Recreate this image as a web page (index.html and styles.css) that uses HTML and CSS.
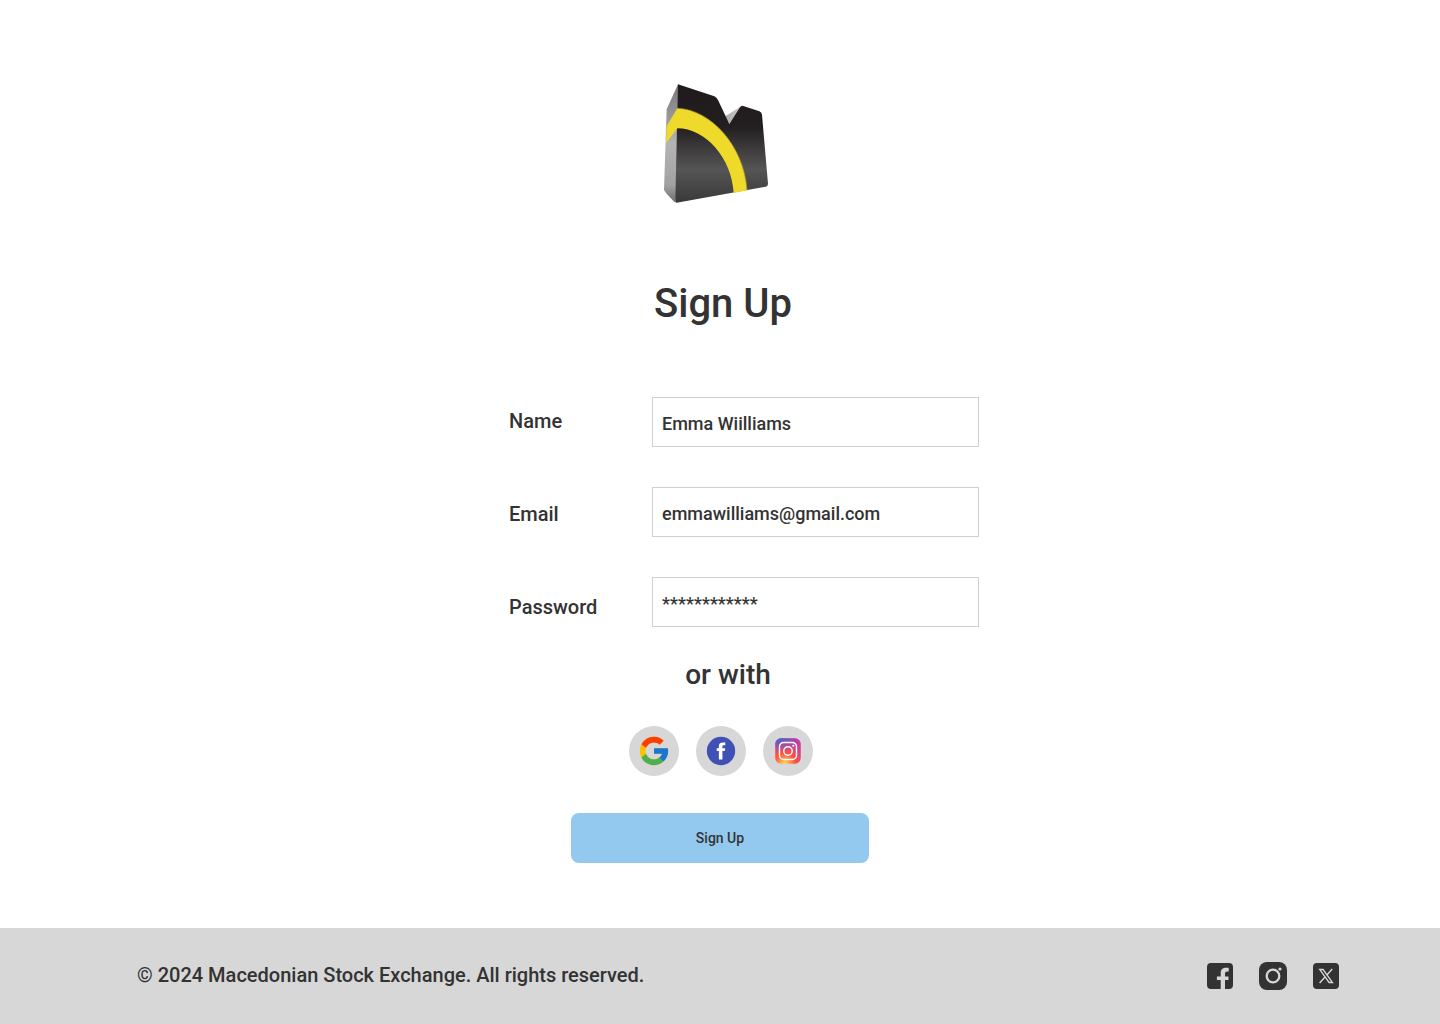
FILE: index.html
```html
<!DOCTYPE html>
<html lang="en">
<head>
  <meta charset="utf-8">
  <meta name="viewport" content="width=device-width, initial-scale=1">
  <title>Sign Up - Macedonian Stock Exchange</title>
  <link rel="stylesheet" href="styles.css">
</head>
<body>
  <main class="signup">
    <svg class="logo" viewBox="0 0 420 405" role="img" aria-label="Macedonian Stock Exchange">
      <defs>
        <linearGradient id="front" x1="0" y1="0" x2="0" y2="1">
          <stop offset="0" stop-color="#1f1b1c"/>
          <stop offset="0.36" stop-color="#231f20"/>
          <stop offset="0.72" stop-color="#565556"/>
          <stop offset="1" stop-color="#3a393a"/>
        </linearGradient>
        <linearGradient id="side" x1="0" y1="0" x2="0" y2="1">
          <stop offset="0" stop-color="#777"/>
          <stop offset="0.5" stop-color="#b4b4b4"/>
          <stop offset="0.85" stop-color="#a2a2a2"/>
          <stop offset="1" stop-color="#6d6d6d"/>
        </linearGradient>
        <linearGradient id="notch" x1="0" y1="0" x2="1" y2="0">
          <stop offset="0" stop-color="#aaa"/>
          <stop offset="1" stop-color="#ccc"/>
        </linearGradient>
      </defs>
      <path d="M84 28 L50 103 L42 344 Q44 352 76 383 L84 300Z" fill="url(#side)"/>
      <path d="M226 124 L238 146 L276 92Z" fill="url(#notch)"/>
      <path d="M84 28 L193 64 Q200 67 204 75 L238 147 L270 97 Q274 91 280 93 L328 109 Q335 112 336 119 L354 326 Q354 334 347 335 L80 383 Q76 383 76 377Z" fill="url(#front)"/>
      <path d="M82 100 C180 104 282 210 291 346 L251 354 C246 250 166 160 82 160 L48 205 L50 154Z" fill="#efda2b"/>
      <path d="M84 100 C180 104 282 210 291 346" fill="none" stroke="#a89a26" stroke-width="2"/>
    </svg>

    <h1 class="title">Sign Up</h1>

    <form class="form" id="signup-form">
      <div class="labels">
        <label for="name">Name</label>
        <label for="email">Email</label>
        <label for="password">Password</label>
      </div>
      <div class="fields">
        <input class="field" id="name" type="text" value="Emma Wiilliams">
        <input class="field" id="email" type="email" value="emmawilliams@gmail.com">
        <input class="field" id="password" type="text" autocomplete="off" value="************">
      </div>
    </form>

    <p class="divider">or with</p>

    <div class="providers">
      <button class="provider" type="button" aria-label="Sign up with Google">
        <svg viewBox="0 0 48 48">
          <path fill="#FFC107" d="M43.611 20.083H42V20H24v8h11.303c-1.649 4.657-6.08 8-11.303 8-6.627 0-12-5.373-12-12s5.373-12 12-12c3.059 0 5.842 1.154 7.961 3.039l5.657-5.657C34.046 6.053 29.268 4 24 4 12.955 4 4 12.955 4 24s8.955 20 20 20 20-8.955 20-20c0-1.341-.138-2.65-.389-3.917z"/>
          <path fill="#FF3D00" d="M6.306 14.691l6.571 4.819C14.655 15.108 18.961 12 24 12c3.059 0 5.842 1.154 7.961 3.039l5.657-5.657C34.046 6.053 29.268 4 24 4 16.318 4 9.656 8.337 6.306 14.691z"/>
          <path fill="#4CAF50" d="M24 44c5.166 0 9.86-1.977 13.409-5.192l-6.19-5.238C29.211 35.091 26.715 36 24 36c-5.202 0-9.619-3.317-11.283-7.946l-6.522 5.025C9.505 39.556 16.227 44 24 44z"/>
          <path fill="#1976D2" d="M43.611 20.083H42V20H24v8h11.303c-.792 2.237-2.231 4.166-4.087 5.571l6.193 5.238C36.971 39.205 44 34 44 24c0-1.341-.138-2.65-.389-3.917z"/>
        </svg>
      </button>
      <button class="provider" type="button" aria-label="Sign up with Facebook">
        <svg viewBox="0 0 48 48">
          <circle cx="24" cy="24" r="20" fill="#3F51B5"/>
          <path fill="#fff" d="M29.368 24H26v12h-5V24h-3v-4h3v-2.41c.002-3.508 1.459-5.59 5.592-5.59H30v4h-2.287C26.104 16 26 16.6 26 17.723V20h4l-.632 4z"/>
        </svg>
      </button>
      <button class="provider" type="button" aria-label="Sign up with Instagram">
        <svg viewBox="0 0 48 48">
          <defs>
            <radialGradient id="warm" cx="19.38" cy="42.035" r="44.899" gradientUnits="userSpaceOnUse">
              <stop offset="0" stop-color="#fd5"/>
              <stop offset=".328" stop-color="#ff543f"/>
              <stop offset=".348" stop-color="#fc5245"/>
              <stop offset=".504" stop-color="#e64771"/>
              <stop offset=".643" stop-color="#d53e91"/>
              <stop offset=".761" stop-color="#cc39a4"/>
              <stop offset=".841" stop-color="#c837ab"/>
            </radialGradient>
            <radialGradient id="cool" cx="11.786" cy="5.54" r="29.813" gradientTransform="matrix(1 0 0 .6663 0 1.849)" gradientUnits="userSpaceOnUse">
              <stop offset="0" stop-color="#4168c9"/>
              <stop offset=".999" stop-color="#4168c9" stop-opacity="0"/>
            </radialGradient>
          </defs>
          <rect x="6" y="6" width="36" height="36" rx="8" fill="url(#warm)"/>
          <rect x="6" y="6" width="36" height="36" rx="8" fill="url(#cool)"/>
          <rect x="12" y="12" width="24" height="24" rx="6" fill="none" stroke="#fff" stroke-width="2"/>
          <circle cx="24" cy="24" r="6" fill="none" stroke="#fff" stroke-width="2"/>
          <circle cx="31.5" cy="16.5" r="1.5" fill="#fff"/>
        </svg>
      </button>
    </div>

    <button class="submit" type="submit" form="signup-form">Sign Up</button>
  </main>

  <footer class="footer">
    <p class="copyright">© 2024 Macedonian Stock Exchange. All rights reserved.</p>
    <nav class="social" aria-label="Social media">
      <a href="#" aria-label="Facebook">
        <svg viewBox="0 0 32 32">
          <path fill="#333" d="M7 3h18a4 4 0 0 1 4 4v18a4 4 0 0 1-4 4h-4V20h3.500v-3.600H21v-2.600c0-1.600.8-2.300 2.200-2.300h1.500V7.800h-2.500c-3.400 0-5.500 1.900-5.500 5.200v3.400h-3.800V20h3.800v9H7a4 4 0 0 1-4-4V7a4 4 0 0 1 4-4z"/>
        </svg>
      </a>
      <a href="#" aria-label="Instagram">
        <svg viewBox="0 0 32 32">
          <rect x="2" y="2" width="28" height="28" rx="8" fill="#333"/>
          <circle cx="16" cy="16" r="6.300" fill="none" stroke="#d7d7d7" stroke-width="2.300"/>
          <circle cx="23" cy="9" r="1.600" fill="#d7d7d7"/>
        </svg>
      </a>
      <a href="#" aria-label="X">
        <svg viewBox="0 0 32 32">
          <rect x="3" y="3" width="26" height="26" rx="4" fill="#333"/>
          <path d="M9.700 9.500h3.400l9.400 13h-3.400z" fill="none" stroke="#d7d7d7" stroke-width="1.300"/>
          <path d="M22.200 9l-5.500 6.200M15 17l-5.400 6" fill="none" stroke="#d7d7d7" stroke-width="1.400"/>
        </svg>
      </a>
    </nav>
  </footer>
</body>
</html>
```
FILE: styles.css
```css
* {
  box-sizing: border-box;
}

body {
  display: flex;
  flex-direction: column;
  min-height: 100vh;
  margin: 0;
  background: #fff;
  color: #333;
  font-family: Roboto, "Liberation Sans", sans-serif;
  font-weight: 500;
}

.signup {
  display: flex;
  flex: 1;
  flex-direction: column;
  align-items: center;
  padding: 75px 16px 64px;
}

.logo {
  width: 140px;
  height: 135px;
}

.title {
  margin: 70px 0 0;
  padding-left: 6px;
  font-size: 40px;
  font-weight: 500;
  line-height: 48px;
}

.form {
  display: flex;
  width: 100%;
  max-width: 518px;
  margin-top: 69px;
  padding-left: 48px;
}

.labels {
  display: flex;
  flex: 0 0 143px;
  flex-direction: column;
  gap: 69px;
  padding-top: 12px;
  font-size: 20px;
  line-height: 24px;
}

.fields {
  display: flex;
  flex: 1;
  flex-direction: column;
  gap: 40px;
  min-width: 0;
}

.field {
  width: 100%;
  height: 50px;
  padding: 2px 9px 0;
  border: 1px solid #d0d0d0;
  border-radius: 0;
  background: #fff;
  color: inherit;
  font: inherit;
  font-size: 18px;
}

.divider {
  margin: 32px 0 0;
  padding-left: 16px;
  font-size: 28px;
  line-height: 32px;
}

.providers {
  display: flex;
  gap: 17px;
  margin-top: 35px;
  padding-left: 2px;
}

.provider {
  display: flex;
  align-items: center;
  justify-content: center;
  width: 50px;
  height: 50px;
  padding: 0;
  border: 0;
  border-radius: 50%;
  background: #d7d7d7;
  cursor: pointer;
}

.provider svg {
  width: 34px;
  height: 34px;
}

.submit {
  width: 100%;
  max-width: 298px;
  height: 50px;
  margin-top: 37px;
  border: 0;
  border-radius: 8px;
  background: #93c9ef;
  color: inherit;
  font: inherit;
  font-size: 14px;
  cursor: pointer;
}

.footer {
  display: flex;
  align-items: center;
  justify-content: space-between;
  gap: 24px;
  min-height: 96px;
  padding: 0 98px 0 137px;
  background: #d7d7d7;
}

.copyright {
  margin: 0;
  padding-bottom: 2px;
  font-size: 20px;
  line-height: 24px;
}

.social {
  display: flex;
  gap: 21px;
}

.social svg {
  display: block;
  width: 32px;
  height: 32px;
}
```
